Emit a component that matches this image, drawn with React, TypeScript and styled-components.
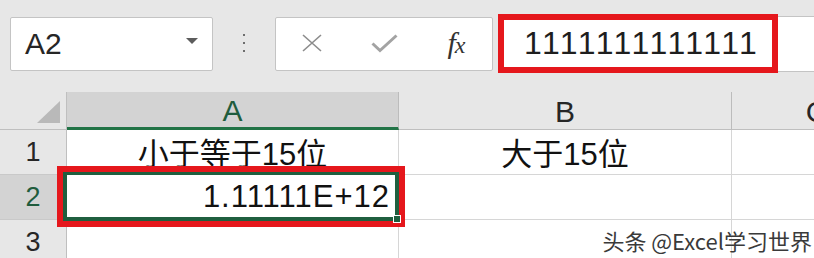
import React from 'react';
import styled, { createGlobalStyle } from 'styled-components';

const GlobalStyle = createGlobalStyle`
  html, body {
    margin: 0;
    padding: 0;
  }
  body {
    background: #e7e7e7;
    font-family: "Liberation Sans", "Noto Sans CJK SC", sans-serif;
    overflow: hidden;
  }
`;

const columns = ['A', 'B', 'C'];
const rows = [
  { id: 1, cells: ['小于等于15位', '大于15位', ''] },
  { id: 2, cells: ['1.11111E+12', '', ''] },
  { id: 3, cells: ['', '', ''] },
];

const selectedCol = 'A';
const selectedRow = 2;

const App = () => {
  return (
    <Page>
      <GlobalStyle />
      <Toolbar>
        <NameBox>
          <span>A2</span>
          <Caret />
        </NameBox>
        <Separator>
          <Dot />
          <Dot />
          <Dot />
        </Separator>
        <FormulaButtons>
          <ToolButton>
            <svg width="22" height="18" viewBox="0 0 22 18">
              <path d="M2 1 L20 17 M20 1 L2 17" stroke="#8c8c8c" strokeWidth="1.6" fill="none" />
            </svg>
          </ToolButton>
          <ToolButton>
            <svg width="27" height="19" viewBox="0 0 27 19">
              <path d="M1.5 9.5 L9 16.5 L25.5 1.5" stroke="#a3a3a3" strokeWidth="3" fill="none" />
            </svg>
          </ToolButton>
          <ToolButton>
            <Fx>
              f<small>x</small>
            </Fx>
          </ToolButton>
        </FormulaButtons>
        <FormulaInput>
          <FormulaText>1111111111111</FormulaText>
          <FormulaHighlight />
        </FormulaInput>
      </Toolbar>

      <Grid>
        <Corner>
          <svg width="23" height="22" viewBox="0 0 23 22">
            <polygon points="23,0 23,22 0,22" fill="#b9b9b9" />
          </svg>
        </Corner>
        {columns.map((col) => (
          <ColHeader key={col} $selected={col === selectedCol}>
            {col}
          </ColHeader>
        ))}
        {rows.map((row) => (
          <React.Fragment key={row.id}>
            <RowHeader $selected={row.id === selectedRow}>{row.id}</RowHeader>
            {row.cells.map((text, i) => {
              const isActive = row.id === selectedRow && columns[i] === selectedCol;
              const isNumber = /^[0-9.E+]+$/.test(text);
              return (
                <Cell key={i} $numeric={isNumber}>
                  {text}
                  {isActive && (
                    <>
                      <Selection />
                      <FillHandle />
                      <CellHighlight />
                    </>
                  )}
                </Cell>
              );
            })}
          </React.Fragment>
        ))}
      </Grid>

      <Watermark>头条 @Excel学习世界</Watermark>
    </Page>
  );
};

export default App;

const Page = styled.div`
  position: relative;
  width: 814px;
  height: 258px;
  overflow: hidden;
  background: #e7e7e7;
  display: flex;
  flex-direction: column;
`;

const Toolbar = styled.div`
  height: 92px;
  box-sizing: border-box;
  padding: 17px 0 0 10px;
  display: flex;
  align-items: flex-start;
  flex-shrink: 0;
`;

const NameBox = styled.div`
  width: 203px;
  height: 54px;
  box-sizing: border-box;
  border: 1px solid #c4c4c4;
  border-radius: 2px;
  background: #fff;
  display: flex;
  align-items: center;
  justify-content: space-between;
  padding: 0 14px 1px 14px;
  font-size: 30px;
  color: #262626;
`;

const Caret = styled.span`
  width: 0;
  height: 0;
  border-left: 6px solid transparent;
  border-right: 6px solid transparent;
  border-top: 6px solid #5c5c5c;
  margin-bottom: 5px;
`;

const Separator = styled.div`
  width: 62px;
  height: 54px;
  display: flex;
  flex-direction: column;
  align-items: center;
  justify-content: center;
  gap: 6px;
  padding-bottom: 2px;
  box-sizing: border-box;
`;

const Dot = styled.span`
  width: 2px;
  height: 2px;
  background: #6e6e6e;
`;

const FormulaButtons = styled.div`
  width: 218px;
  height: 54px;
  box-sizing: border-box;
  border: 1px solid #c4c4c4;
  border-radius: 2px;
  background: #fff;
  display: grid;
  grid-template-columns: repeat(3, 72px);
`;

const ToolButton = styled.div`
  display: flex;
  align-items: center;
  justify-content: center;
  padding-bottom: 2px;
`;

const Fx = styled.span`
  font-family: "Liberation Serif", serif;
  font-style: italic;
  font-size: 30px;
  color: #333;
  line-height: 1;
  letter-spacing: -1px;

  & > small {
    font-size: 24px;
  }
`;

const FormulaInput = styled.div`
  position: relative;
  flex: 1;
  height: 56px;
  margin: -1px 0 0 5px;
  box-sizing: border-box;
  border-top: 1px solid #c4c4c4;
  border-bottom: 1px solid #c4c4c4;
  background: #fff;
  display: flex;
  align-items: center;
  padding: 0 0 1px 26px;
`;

const FormulaText = styled.span`
  font-size: 32px;
  letter-spacing: 2.5px;
  color: #1e1e1e;
`;

const FormulaHighlight = styled.div`
  position: absolute;
  top: -3px;
  left: 0;
  width: 280px;
  height: 59px;
  box-sizing: border-box;
  border: 6px solid #e5171c;
  pointer-events: none;
`;

const Grid = styled.div`
  flex: 1;
  display: grid;
  grid-template-columns: 67px 332px 333px 170px;
  grid-template-rows: 38px 45px 45px 45px;
  background: #fff;
`;

const Corner = styled.div`
  background: #e7e7e7;
  border-bottom: 1px solid #bfbfbf;
  border-right: 1px solid #bfbfbf;
  display: flex;
  align-items: flex-end;
  justify-content: flex-end;
  padding: 0 6px 6px 0;
`;

const ColHeader = styled.div<{ $selected: boolean }>`
  background: ${({ $selected }) => ($selected ? '#d3d3d3' : '#e7e7e7')};
  border-right: 1px solid #bcbcbc;
  border-bottom: ${({ $selected }) => ($selected ? '3px solid #217346' : '1px solid #bfbfbf')};
  color: ${({ $selected }) => ($selected ? '#1f5c3d' : '#262626')};
  display: flex;
  align-items: center;
  justify-content: center;
  padding-top: 3px;
  font-size: 30px;
  box-sizing: border-box;
  overflow: hidden;
  white-space: nowrap;
`;

const RowHeader = styled.div<{ $selected: boolean }>`
  background: ${({ $selected }) => ($selected ? '#d3d3d3' : '#e7e7e7')};
  border-right: 1px solid #bfbfbf;
  border-bottom: 1px solid #c9c9c9;
  color: ${({ $selected }) => ($selected ? '#1f5c3d' : '#262626')};
  display: flex;
  align-items: center;
  justify-content: center;
  font-size: 27px;
  box-sizing: border-box;
`;

const Cell = styled.div<{ $numeric: boolean }>`
  position: relative;
  border-right: 1px solid #d6d6d6;
  border-bottom: 1px solid #d6d6d6;
  display: flex;
  align-items: center;
  justify-content: ${({ $numeric }) => ($numeric ? 'flex-end' : 'center')};
  padding: 0 ${({ $numeric }) => ($numeric ? '8px' : '9px')} 1px 9px;
  box-sizing: border-box;
  font-size: 31px;
  letter-spacing: ${({ $numeric }) => ($numeric ? '1px' : '0')};
  color: #111;
  white-space: nowrap;
`;

const Selection = styled.div`
  position: absolute;
  top: -4px;
  left: -4px;
  right: -1px;
  bottom: -2px;
  border: 4px solid #1f5f3f;
  pointer-events: none;
  z-index: 2;
`;

const FillHandle = styled.div`
  position: absolute;
  right: -3px;
  bottom: -4px;
  width: 6px;
  height: 6px;
  background: #1f5f3f;
  border: 1px solid #fff;
  z-index: 4;
`;

const CellHighlight = styled.div`
  position: absolute;
  top: -9px;
  left: -10px;
  width: 348px;
  height: 61px;
  box-sizing: border-box;
  border: 6px solid #e5171c;
  pointer-events: none;
  z-index: 3;
`;

const Watermark = styled.div`
  position: absolute;
  right: 2px;
  bottom: 7px;
  font-family: "Noto Sans CJK SC", sans-serif;
  font-size: 22px;
  line-height: 1;
  color: #3a3a3a;
  text-shadow: 0 0 2px #fff, 0 0 1px #fff;
  white-space: nowrap;
`;
